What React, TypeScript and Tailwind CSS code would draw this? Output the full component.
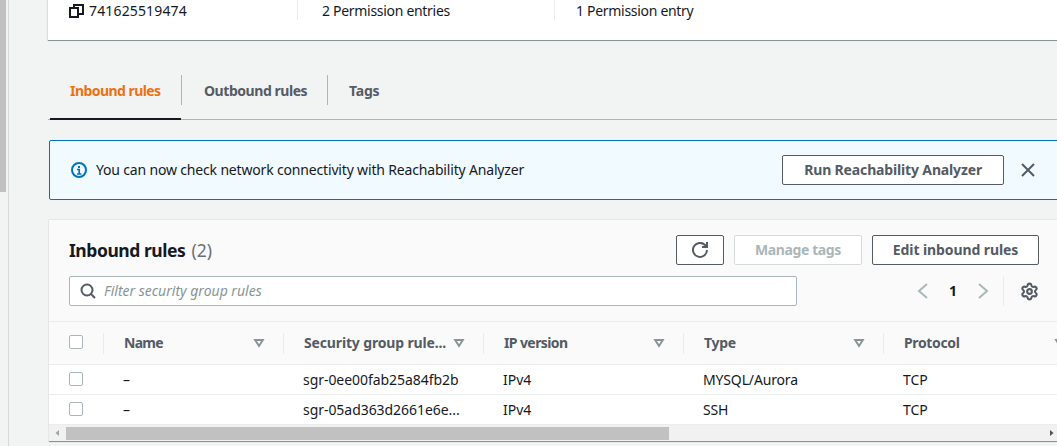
import { Settings } from "lucide-react";

const font = "font-['Noto_Sans',sans-serif]";

function CopyIcon() {
    return (
        <svg width="16" height="16" viewBox="0 0 16 16" fill="none" stroke="#16191f" strokeWidth="2" className="shrink-0">
            <rect x="1" y="5" width="8" height="9" />
            <path d="M5 5V2h9v9h-5" />
        </svg>
    );
}

function FilterCaret() {
    return (
        <svg width="12" height="12" viewBox="0 0 12 12" fill="none" stroke="#879596" strokeWidth="2" className="shrink-0">
            <path d="M2.2 3h7.6L6 9z" />
        </svg>
    );
}

function Checkbox() {
    return <div className="h-[14px] w-[14px] rounded-[2px] border border-[#aab7b8] bg-white" />;
}

function HeaderCell({ label, width, tracking, last }: { label: string; width: string; tracking: string; last?: boolean }) {
    return (
        <div className={`flex h-[21px] shrink-0 items-center justify-between pl-5 pr-[18px] ${width} ${last ? "" : "border-r border-[#eaeded]"}`}>
            <span className={`pb-0.5 text-[14px] font-bold text-[#545b64] ${tracking}`}>{label}</span>
            <FilterCaret />
        </div>
    );
}

function Row({ id, type }: { id: string; type: string }) {
    return (
        <div className="flex h-[30px] items-center border-b border-[#eaeded] bg-white text-[14px] text-[#16191f]">
            <div className="flex w-[54px] shrink-0 justify-start pb-0.5 pl-5">
                <Checkbox />
            </div>
            <div className="w-[180px] shrink-0 pl-5">–</div>
            <div className="w-[200px] shrink-0 pl-5 tracking-[-0.05px]">{id}</div>
            <div className="w-[200px] shrink-0 pl-5">IPv4</div>
            <div className="w-[200px] shrink-0 pl-5 tracking-[-0.15px]">{type}</div>
            <div className="w-[200px] shrink-0 pl-5">TCP</div>
        </div>
    );
}

export default function App() {
    return (
        <div className={`flex h-[446px] w-[1057px] overflow-hidden bg-[#f2f3f3] ${font}`}>
            <div className="h-full w-[9px] shrink-0 border-r border-[#d5dbdb] bg-[#f2f3f3]">
                <div className="h-[192px] w-[6px] bg-[#c1c1c1]" />
            </div>

            <div className="w-[1048px] shrink-0 pl-[39px]">
                {/* details card, scrolled off the top */}
                <div className="flex h-[41px] w-[1020px] border-b border-[#879596] bg-white text-[14px] leading-[22px] text-[#16191f] shadow-[-1px_0_1px_rgba(0,28,36,0.1)]">
                    <div className="h-5 w-[250px] border-r border-[#eaeded] pl-[21px]">
                        <div className="flex items-center gap-[4px] tracking-[0.15px]">
                            <CopyIcon />
                            741625519474
                        </div>
                    </div>
                    <div className="h-5 w-[257px] border-r border-[#eaeded] pl-[24px] tracking-[-0.3px]">2 Permission entries</div>
                    <div className="h-5 pl-[21px] tracking-[-0.3px]">1 Permission entry</div>
                </div>

                {/* tabs */}
                <div className="mt-[34px] flex h-[45px] w-[1020px] items-start border-b border-[#aab7b8] text-[14px] font-bold">
                    <div className="ml-[2px] h-[45px] w-[131px] border-b-2 border-[#16191f] pl-5">
                        <div className="-mr-px flex h-[30px] items-center border-r border-[#aab7b8] tracking-[-0.55px] text-[#ec7211]">Inbound rules</div>
                    </div>
                    <div className="flex h-[30px] w-[147px] items-center border-r border-[#aab7b8] pl-[23px] tracking-[-0.45px] text-[#545b64]">Outbound rules</div>
                    <div className="flex h-[30px] items-center pl-[21px] tracking-[-0.2px] text-[#545b64]">Tags</div>
                </div>

                {/* flash */}
                <div className="ml-px mt-5 flex h-[60px] w-[1020px] items-center rounded-[2px] border border-[#0073bb] bg-[#f1faff] pl-5 text-[14px] text-[#16191f]">
                    <svg width="16" height="16" viewBox="0 0 16 16" fill="none" stroke="#0073bb" strokeWidth="2" className="mr-[9px] ml-px shrink-0">
                        <circle cx="8" cy="8" r="7" />
                        <path d="M8 4v2" />
                        <path d="M6 7.5h2.2V12M6 12h4.4" strokeWidth="1.7" />
                    </svg>
                    <span className="flex-none pb-0.5 tracking-[-0.17px]">You can now check network connectivity with Reachability Analyzer</span>
                    <div className="ml-[258px] flex h-[30px] w-[222px] shrink-0 items-center justify-center rounded-[2px] border border-[#545b64] bg-white pb-0.5 font-bold tracking-[-0.15px] text-[#545b64]">
                        Run Reachability Analyzer
                    </div>
                    <svg width="16" height="16" viewBox="0 0 16 16" fill="none" stroke="#545b64" strokeWidth="2" className="ml-[16px] shrink-0">
                        <path d="M2 2l12 12M14 2L2 14" />
                    </svg>
                </div>

                {/* table */}
                <div className="ml-px mt-5 w-[1011px] overflow-hidden border-b border-[#879596] bg-[#fafafa] shadow-[0_0_1px_rgba(0,28,36,0.3)]">
                    <div className="flex h-[102px] flex-col border-b border-[#eaeded] pl-5 pr-[21px] pt-[15px]">
                        <div className="flex h-[30px] items-center">
                            <h2 className="text-[17.5px] font-bold tracking-[-0.45px] text-[#16191f]">
                                Inbound rules <span className="ml-[2px] font-normal tracking-normal text-[#687078]">(2)</span>
                            </h2>
                            <div className="ml-auto flex gap-[10px]">
                                <div className="flex h-[30px] w-[48px] items-center justify-center rounded-[2px] border border-[#545b64] bg-white">
                                    <svg width="16" height="16" viewBox="0 0 16 16" fill="none" stroke="#545b64" strokeWidth="2">
                                        <path d="M15 8a7 7 0 1 1-2-5l2 2" />
                                        <path d="M15 0v5h-5" />
                                    </svg>
                                </div>
                                <div className="flex h-[30px] w-[128px] items-center justify-center rounded-[2px] border border-[#d5dbdb] bg-white pb-0.5 text-[14px] font-bold tracking-[-0.4px] text-[#aab7b8]">
                                    Manage tags
                                </div>
                                <div className="flex h-[30px] w-[167px] items-center justify-center rounded-[2px] border border-[#545b64] bg-white pb-0.5 text-[14px] font-bold tracking-[-0.1px] text-[#545b64]">
                                    Edit inbound rules
                                </div>
                            </div>
                        </div>
                        <div className="mt-[11px] flex h-[30px] items-center">
                            <div className="flex h-[30px] w-[728px] items-center rounded-[2px] border border-[#aab7b8] bg-white pl-[10px]">
                                <svg width="16" height="16" viewBox="0 0 16 16" fill="none" stroke="#545b64" strokeWidth="2" className="mr-[8px] shrink-0">
                                    <circle cx="7" cy="7" r="5.5" />
                                    <path d="M11 11l4 4" />
                                </svg>
                                <span className="pb-0.5 text-[14px] italic text-[#879596]">Filter security group rules</span>
                            </div>
                            <svg width="16" height="16" viewBox="0 0 16 16" fill="none" stroke="#aab7b8" strokeWidth="2" className="ml-[118px] shrink-0">
                                <path d="M12 1L4 8l8 7" />
                            </svg>
                            <span className="ml-[18px] pb-0.5 text-[14px] font-bold text-[#16191f]">1</span>
                            <svg width="16" height="16" viewBox="0 0 16 16" fill="none" stroke="#aab7b8" strokeWidth="2" className="ml-[18px] shrink-0">
                                <path d="M4 1l8 7-8 7" />
                            </svg>
                            <div className="ml-[12px] h-[30px] border-l border-[#eaeded]" />
                            <Settings size={19} strokeWidth={2.6} className="ml-[16px] text-[#545b64]" />
                        </div>
                    </div>
                    <div className="flex h-[43px] items-center border-b border-[#eaeded]">
                        <div className="flex h-[21px] w-[55px] shrink-0 items-center border-r border-[#eaeded] pb-0.5 pl-5">
                            <Checkbox />
                        </div>
                        <HeaderCell label="Name" width="w-[180px]" tracking="tracking-[-0.7px]" />
                        <HeaderCell label="Security group rule..." width="w-[200px]" tracking="tracking-[-0.15px]" />
                        <HeaderCell label="IP version" width="w-[200px]" tracking="tracking-[-0.6px]" />
                        <HeaderCell label="Type" width="w-[200px]" tracking="tracking-[-0.3px]" />
                        <HeaderCell label="Protocol" width="w-[200px]" tracking="tracking-[-0.35px]" last />
                    </div>
                    <Row id="sgr-0ee00fab25a84fb2b" type="MYSQL/Aurora" />
                    <Row id="sgr-05ad363d2661e6e..." type="SSH" />
                    <div className="flex h-[16px] items-center bg-[#f1f1f1]">
                        <svg width="17" height="16" viewBox="0 0 17 16" className="shrink-0">
                            <path d="M10 5v6L6.5 8z" fill="#a3a3a3" />
                        </svg>
                        <div className="h-[13px] w-[603px] bg-[#c1c1c1]" />
                        <div className="flex-1" />
                        <svg width="17" height="16" viewBox="0 0 17 16" className="shrink-0">
                            <path d="M7 5v6l3.5-3z" fill="#505050" />
                        </svg>
                    </div>
                </div>
            </div>
        </div>
    );
}
